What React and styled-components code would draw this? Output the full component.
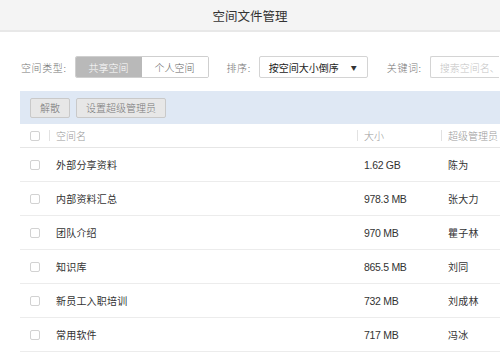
import React from 'react'
import styled, { createGlobalStyle } from 'styled-components'

const GlobalStyle = createGlobalStyle`
    html, body {
        margin: 0;
        padding: 0;
        background: #fff;
        overflow: hidden;
    }
    body {
        font-family: "Noto Sans CJK SC", "Noto Sans", sans-serif;
        font-weight: 300;
        color: #333;
    }
`

const spaces = [
    { name: '外部分享资料', size: '1.62 GB', admin: '陈为' },
    { name: '内部资料汇总', size: '978.3 MB', admin: '张大力' },
    { name: '团队介绍', size: '970 MB', admin: '瞿子林' },
    { name: '知识库', size: '865.5 MB', admin: '刘同' },
    { name: '新员工入职培训', size: '732 MB', admin: '刘成林' },
    { name: '常用软件', size: '717 MB', admin: '冯冰' },
]

const App = () => {
    return (
        <Page>
            <GlobalStyle />
            <Header>空间文件管理</Header>

            <FilterBar>
                <Label>空间类型:</Label>
                <Segments>
                    <Segment active>共享空间</Segment>
                    <Segment>个人空间</Segment>
                </Segments>

                <Label gap={18}>排序:</Label>
                <Select>
                    <span>按空间大小倒序</span>
                    <Caret>▼</Caret>
                </Select>

                <Label gap={19}>关键词:</Label>
                <SearchBox>搜索空间名、</SearchBox>
            </FilterBar>

            <Toolbar>
                <ToolButton>解散</ToolButton>
                <ToolButton>设置超级管理员</ToolButton>
            </Toolbar>

            <Table>
                <HeadRow>
                    <CheckCell><Checkbox /></CheckCell>
                    <HeadCell>空间名</HeadCell>
                    <HeadCell>大小</HeadCell>
                    <HeadCell>超级管理员</HeadCell>
                </HeadRow>
                {spaces.map((s) => (
                    <Row key={s.name}>
                        <CheckCell><Checkbox /></CheckCell>
                        <Cell>{s.name}</Cell>
                        <Cell numeric>{s.size}</Cell>
                        <Cell>{s.admin}</Cell>
                    </Row>
                ))}
            </Table>
        </Page>
    )
}

export default App

const Page = styled.div`
    width: 500px;
    height: 356px;
    overflow: hidden;
`

const Header = styled.div`
    height: 30px;
    background: #f4f4f4;
    border-bottom: 2px solid #e8e8e8;
    display: flex;
    align-items: center;
    justify-content: center;
    font-size: 12.5px;
    font-weight: 400;
    color: #333;
`

const FilterBar = styled.div`
    display: flex;
    align-items: center;
    margin-top: 24px;
    padding-left: 21px;
    height: 22px;
    white-space: nowrap;
    font-size: 10px;
`

const Label = styled.span`
    flex-shrink: 0;
    color: #777;
    margin-left: ${(p) => p.gap || 0}px;
    margin-right: 8px;
    letter-spacing: 0.6px;
`

const Segments = styled.div`
    flex-shrink: 0;
    display: flex;
    height: 22px;
    border: 1px solid #cfcfcf;
    border-radius: 2px;
    box-sizing: border-box;
    overflow: hidden;
`

const Segment = styled.div`
    width: 66px;
    display: flex;
    align-items: center;
    justify-content: center;
    background: ${(p) => (p.active ? '#b9b9b9' : '#fff')};
    color: ${(p) => (p.active ? '#fff' : '#666')};
`

const Select = styled.div`
    flex-shrink: 0;
    width: 109px;
    height: 22px;
    box-sizing: border-box;
    border: 1px solid #d4d4d4;
    border-radius: 2px;
    display: flex;
    align-items: center;
    justify-content: space-between;
    padding: 0 10px 0 9px;
    color: #222;
    font-weight: 400;
`

const Caret = styled.span`
    font-size: 6px;
    color: #333;
`

const SearchBox = styled.div`
    flex-shrink: 0;
    width: 69px;
    height: 22px;
    box-sizing: border-box;
    border: 1px solid #d4d4d4;
    border-right: none;
    border-radius: 2px 0 0 2px;
    display: flex;
    align-items: center;
    padding-left: 9px;
    color: #c4c4c4;
    overflow: hidden;
`

const Toolbar = styled.div`
    margin: 13px 0 0 20px;
    height: 33px;
    background: #dfe8f4;
    display: flex;
    align-items: center;
    gap: 6px;
    padding-left: 10px;
`

const ToolButton = styled.div`
    height: 20px;
    box-sizing: border-box;
    padding: 0 9px;
    border: 1px solid #c9c9c9;
    border-radius: 2px;
    background: #e7e7e7;
    display: flex;
    align-items: center;
    font-size: 10px;
    color: #777;
`

const Table = styled.div`
    margin-left: 20px;
`

const HeadRow = styled.div`
    display: grid;
    grid-template-columns: 29px 308px 84px 1fr;
    height: 23px;
    align-items: center;
    border-bottom: 1px solid #e6e6e6;
`

const Row = styled(HeadRow)`
    height: 33px;
    border-bottom: 1px solid #ececec;
`

const CheckCell = styled.div`
    padding-left: 10px;
    display: flex;
    align-items: center;
`

const Checkbox = styled.span`
    width: 10px;
    height: 10px;
    box-sizing: border-box;
    border: 1px solid #d2d2d2;
    border-radius: 2px;
    background: #fff;
`

const HeadCell = styled.div`
    font-size: 10px;
    color: #999;
    padding-left: 6px;
    border-left: 1px solid #e2e2e2;
    line-height: 11px;
    white-space: nowrap;
`

const Cell = styled.div`
    font-size: ${(p) => (p.numeric ? '10.5px' : '10px')};
    font-family: ${(p) => (p.numeric ? '"Liberation Sans", sans-serif' : 'inherit')};
    font-weight: 400;
    letter-spacing: ${(p) => (p.numeric ? '-0.3px' : '0.2px')};
    color: #333;
    padding-left: 7px;
    white-space: nowrap;
`
